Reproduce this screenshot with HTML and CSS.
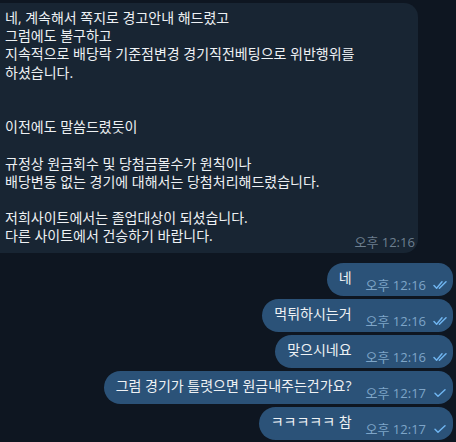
FILE: index.html
```html
<!DOCTYPE html>
<html lang="ko">
<head>
<meta charset="utf-8">
<link rel="stylesheet" href="styles.css">
</head>
<body>
<div class="chat">
  <div class="msg in">
    <div class="text">네, 계속해서 쪽지로 경고안내 해드렸고<br>그럼에도 불구하고<br>지속적으로 배당락 기준점변경 경기직전베팅으로 위반행위를<br>하셨습니다.<br><br><br>이전에도 말씀드렸듯이<br><br>규정상 원금회수 및 당첨금몰수가 원칙이나<br>배당변동 없는 경기에 대해서는 당첨처리해드렸습니다.<br><br>저희사이트에서는 졸업대상이 되셨습니다.<br>다른 사이트에서 건승하기 바랍니다.</div>
    <div class="meta">오후 12:16</div>
  </div>

  <div class="msg out">
    <div class="text">네</div>
    <div class="meta">오후 12:16<svg class="check" viewBox="0 0 14 10" width="14" height="10"><path d="M1 5.5 L3.6 8.2 L9 1.8" /><path d="M6.4 8.2 L13 1.8" /></svg></div>
  </div>
  <div class="msg out">
    <div class="text">먹튀하시는거</div>
    <div class="meta">오후 12:16<svg class="check" viewBox="0 0 14 10" width="14" height="10"><path d="M1 5.5 L3.6 8.2 L9 1.8" /><path d="M6.4 8.2 L13 1.8" /></svg></div>
  </div>
  <div class="msg out">
    <div class="text">맞으시네요</div>
    <div class="meta">오후 12:16<svg class="check" viewBox="0 0 14 10" width="14" height="10"><path d="M1 5.5 L3.6 8.2 L9 1.8" /><path d="M6.4 8.2 L13 1.8" /></svg></div>
  </div>
  <div class="msg out">
    <div class="text">그럼 경기가 틀렷으면 원금내주는건가요?</div>
    <div class="meta">오후 12:17<svg class="check" viewBox="0 0 14 10" width="14" height="10"><path d="M2 5.2 L5 8.2 L12 1.8" /></svg></div>
  </div>
  <div class="msg out">
    <div class="text">ㅋㅋㅋㅋㅋ 참</div>
    <div class="meta">오후 12:17<svg class="check" viewBox="0 0 14 10" width="14" height="10"><path d="M2 5.2 L5 8.2 L12 1.8" /></svg></div>
  </div>
</div>
</body>
</html>
```

FILE: styles.css
```css
html, body {
  margin: 0;
  padding: 0;
  background: #0e1621;
  height: 100%;
  overflow: hidden;
}

.chat {
  display: flex;
  flex-direction: column;
  padding-top: 3px;
  font-family: "Open Sans", "Noto Sans CJK KR", sans-serif;
  color: #eef1f4;
}

.msg {
  display: flex;
  align-items: flex-end;
  box-sizing: border-box;
}

.msg .text {
  font-size: 14px;
  line-height: 18.2px;
  white-space: nowrap;
}

.msg .meta {
  font-size: 13px;
  line-height: 14px;
  white-space: nowrap;
  display: flex;
  align-items: center;
}

.in {
  background: #182533;
  width: 418px;
  border-radius: 0 14px 14px 0;
  padding: 6px 8px 4px 5px;
  justify-content: space-between;
}

.in .text {
  padding-bottom: 3px;
}

.in .meta {
  color: #6d7f8f;
}

.out {
  align-self: flex-end;
  margin-right: 3px;
  background: #2b5278;
  border-radius: 17px 15px 15px 17px;
  padding: 7px 6px 4px 12px;
  margin-top: 3px;
  height: 33px;
}

.msg.in + .msg.out {
  margin-top: 10px;
}

.out .text {
  margin-bottom: 4px;
  margin-right: 14px;
}

.out .meta {
  color: #7ea5c8;
}

.check {
  margin-left: 7px;
  fill: none;
  stroke: #6fb4ef;
  stroke-width: 1.5;
  stroke-linecap: round;
  stroke-linejoin: round;
}
```
